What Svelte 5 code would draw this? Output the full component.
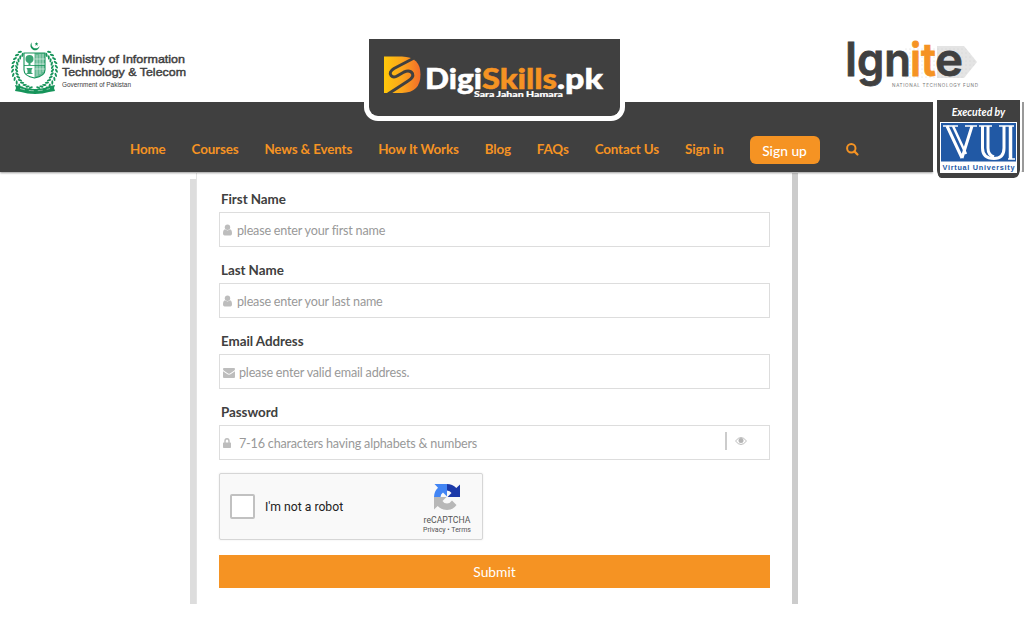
<script>
    const links = ['Home', 'Courses', 'News & Events', 'How It Works', 'Blog', 'FAQs', 'Contact Us', 'Sign in'];

    const fields = [
        { id: 'first', label: 'First Name', icon: 'user', hint: 'please enter your first name', type: 'text' },
        { id: 'last', label: 'Last Name', icon: 'user', hint: 'please enter your last name', type: 'text' },
        { id: 'email', label: 'Email Address', icon: 'mail', hint: 'please enter valid email address.', type: 'email' },
        { id: 'password', label: 'Password', icon: 'lock', hint: '7-16 characters having alphabets & numbers', type: 'password' }
    ];

    // leaves of the wreath, mirrored left and right of the shield
    const leaves = [];
    for (let i = 0; i < 13; i++) {
        const angle = (-48 + i * 10.5) * Math.PI / 180;
        for (const side of [-1, 1]) {
            for (const r of [18, 22]) {
                leaves.push({
                    x: 23.5 + side * Math.cos(angle) * r,
                    y: 28 + Math.sin(angle) * (r + 1),
                    turn: side * ((-48 + i * 10.5) + (r < 20 ? 125 : 55))
                });
            }
        }
    }

    let showPassword = false;
</script>

<header>
    <div class="top">
        <a href="/" class="ministry">
            <svg width="48" height="54" viewBox="0 0 48 54" fill="#16945a">
                <path d="M21 1.2A4.6 4.6 0 1 0 28.6 5A4 4 0 1 1 21 1.2Z" />
                <path d="M25.5 1l.5 1.3 1.4.1-1.1.9.4 1.4-1.2-.8-1.2.8.4-1.4-1.1-.9 1.4-.1z" />
                {#each leaves as leaf}
                    <ellipse cx={leaf.x} cy={leaf.y} rx="2.2" ry="1" transform="rotate({leaf.turn} {leaf.x} {leaf.y})" />
                {/each}
                <path d="M13 12H34V29Q34 35 23.500 37Q13 35 13 29Z" fill="#fff" stroke="#16945a" stroke-width="1.1" />
                <path d="M23.500 12H34V29Q34 35 23.500 37Z" opacity=".65" />
                <path d="M26 14v21M29 13v20M32 13v18M24 18h10M24 23h10M24 28h10" stroke="#fff" stroke-width=".5" />
                <path d="M14.500 18q0-4 4-4t4 4q0 3-3 4v2h-2v-2q-3-1-3-4zM15.500 27h6l-1 2v3h1v1h-6v-1h1v-3z" opacity=".85" />
                <path d="M13 24.5H34" stroke="#16945a" stroke-width=".8" />
                <path d="M4 44l5 1q6 3 15 3t15-3l5-1-1 3 1 3-6 1q-6 2-14 2t-14-2l-6-1 1-3z" />
                <path d="M9 47.500q15 4.500 30 0" stroke="#fff" stroke-width=".5" stroke-dasharray="5 4" fill="none" />
            </svg>
            <svg class="words" width="126" height="40" viewBox="0 0 126 40">
                <text x="0" y="11" textLength="123" lengthAdjust="spacingAndGlyphs">Ministry of Information</text>
                <text x="0" y="24" textLength="124" lengthAdjust="spacingAndGlyphs">Technology &amp; Telecom</text>
                <text x="0" y="34.500" class="small" textLength="69" lengthAdjust="spacingAndGlyphs">Government of Pakistan</text>
            </svg>
        </a>
        <a href="/ignite" class="ignite">
            <svg width="134" height="54" viewBox="0 0 134 54">
                <defs>
                    <pattern id="dots" width="4" height="4" patternUnits="userSpaceOnUse">
                        <circle cx="1" cy="1" r=".5" fill="#ccc" />
                    </pattern>
                </defs>
                <path d="M92 6H119L132 22L119 38H92Z" fill="#e4e4e4" />
                <path d="M58 6H119L132 22L119 38H58Z" fill="url(#dots)" />
                <text y="35.500" class="ignite-word">
                    <tspan x="0" textLength="66" lengthAdjust="spacingAndGlyphs">Ign</tspan><tspan class="hot" x="65" textLength="26" lengthAdjust="spacingAndGlyphs">it</tspan><tspan x="90" textLength="28" lengthAdjust="spacingAndGlyphs">e</tspan>
                </text>
                <text x="47" y="47" class="fund" textLength="86">NATIONAL TECHNOLOGY FUND</text>
            </svg>
        </a>
    </div>

    <nav>
        <ul>
            {#each links as link}
                <li><a href="/">{link}</a></li>
            {/each}
        </ul>
        <a href="/signup" class="signup">Sign up</a>
        <button class="search" aria-label="Search">
            <svg width="13" height="13" viewBox="0 0 13 13" fill="none" stroke="#f59323" stroke-width="2">
                <circle cx="5.300" cy="5.300" r="4.200" />
                <path d="M8.400 8.400L11.500 11.500" stroke-width="2.200" stroke-linecap="round" />
            </svg>
        </button>
    </nav>

    <a href="/" class="brand" aria-label="DigiSkills.pk">
        <svg width="251" height="77" viewBox="0 0 251 77">
            <defs>
                <linearGradient id="sun" x1="0" x2="1" y1="0" y2="0">
                    <stop offset="0" stop-color="#ffc80a" />
                    <stop offset=".5" stop-color="#fba51c" />
                    <stop offset="1" stop-color="#f36c2a" />
                </linearGradient>
            </defs>
            <path d="M15 17.500H33Q51.500 18 51.500 35.500Q51.500 53.500 33 54H15Z" fill="url(#sun)" />
            <path d="M47 18L25 29.500Q19.500 33 22 36.500Q24.500 39.500 29 36.500L35 33Q41 30.500 43.500 34.500Q45 38.500 39 42L19 55" fill="none" stroke="#404040" stroke-width="3" />
            <text y="49.500" class="digi">
                <tspan x="56" textLength="57" lengthAdjust="spacingAndGlyphs">Digi</tspan><tspan class="hot" x="113" textLength="75" lengthAdjust="spacingAndGlyphs">Skills</tspan><tspan x="188" textLength="46" lengthAdjust="spacingAndGlyphs">.pk</tspan>
            </text>
            <text x="105" y="57.500" class="tagline" textLength="89" lengthAdjust="spacingAndGlyphs">Sara Jahan Hamara</text>
        </svg>
    </a>

    <div class="badge">
        <em>Executed by</em>
        <svg width="77" height="51" viewBox="0 0 77 51">
            <rect width="77" height="51" fill="#fff" />
            <rect x="1" y="1" width="75" height="38.500" fill="#2159a5" />
            <!-- monogram: inlined V, U and a closing bar -->
            <g fill="none" stroke="#fff">
                <path d="M3 4H18M25 4H37M39 4H52M59 4H74M68 37H75" stroke-width="1.500" />
                <path d="M7 4L22 36M32 4L22 36" stroke-width="3" />
                <path d="M13 4L26 32" stroke-width="2.500" />
                <path d="M42.500 4V26Q42.500 36.500 54 36.500Q64 36.500 64 26V4" stroke-width="3" />
                <path d="M48 4V26Q48 33 54 35" stroke-width="3" />
                <path d="M70.500 4V37" stroke-width="3.500" />
            </g>
            <text x="2.500" y="47.500" class="vu-name" textLength="72">Virtual University</text>
        </svg>
    </div>
</header>

<main>
    <form>
        {#each fields as field}
            <label for={field.id}>{field.label}</label>
            <div class="field">
                {#if field.icon === 'user'}
                    <svg width="9" height="12" viewBox="0 0 9 12" fill="#bdbdbd">
                        <circle cx="4.500" cy="3.300" r="2.700" />
                        <path d="M2 5.300Q0 5.800 0 9.500Q0 11.500 1.600 11.500H7.400Q9 11.500 9 9.500Q9 5.800 7 5.300Q4.500 7.500 2 5.300Z" />
                    </svg>
                {:else if field.icon === 'mail'}
                    <svg class="mail" width="12" height="10" viewBox="0 0 12 10" fill="#bdbdbd">
                        <path d="M0 1Q0 0 1 0H11Q12 0 12 1Q12 2 11 2.700L7 5.400Q6 6 5 5.400L1 2.700Q0 2 0 1ZM0 3.300L4.500 6.300Q6 7.200 7.500 6.300L12 3.300V9Q12 10 11 10H1Q0 10 0 9Z" />
                    </svg>
                {:else}
                    <svg class="lock" width="8" height="10" viewBox="0 0 8 10" fill="#bdbdbd">
                        <path d="M2 5V3Q2 .8 4 .8T6 3V5" fill="none" stroke="#bdbdbd" stroke-width="1.400" />
                        <rect y="4.500" width="8" height="5.500" rx=".7" />
                    </svg>
                {/if}
                <input
                    id={field.id}
                    type={field.type === 'password' && showPassword ? 'text' : field.type}
                    placeholder={field.hint}
                />
                {#if field.type === 'password'}
                    <button type="button" class="eye" aria-label="Show password" on:click={() => (showPassword = !showPassword)}>
                        <svg width="12" height="8" viewBox="0 0 12 8">
                            <path d="M.5 4Q6-3 11.500 4Q6 11 .5 4Z" fill="none" stroke="#bdbdbd" />
                            <circle cx="6" cy="3.500" r="2.500" fill="#b5b5b5" />
                        </svg>
                    </button>
                {/if}
            </div>
        {/each}

        <div class="captcha">
            <span class="box"></span>
            <span class="robot">I'm not a robot</span>
            <div class="recaptcha">
                <svg width="28" height="28" viewBox="0 0 28 28">
                    <path d="M14 1A13 13 0 0 1 23.300 5L27 1.500V14H14.500L18.500 10Q17 7.500 14 7.500Z" fill="#1c3aa9" />
                    <path d="M1 14A13 13 0 0 1 5 4.700L1.500 1H14V13.500L10 9.500Q7.500 11 7.500 14Z" fill="#4285f4" />
                    <path d="M1 14H13.500L9.500 18Q11 20.500 14 20.500Q17 20.500 19 17.500L23.500 22Q20 27 14 27A13 13 0 0 1 4.700 23L1 26.500Z" fill="#b8b8b8" />
                </svg>
                <span>reCAPTCHA</span>
                <small>Privacy &bull; Terms</small>
            </div>
        </div>

        <button class="submit">Submit</button>
    </form>
</main>

<style>
    :global(body) {
        background: #fff;
        font-family: Lato, sans-serif;
        color: #404040;
    }

    header {
        position: relative;
        padding-top: 39px;
    }

    a {
        text-decoration: none;
        color: inherit;
    }

    svg {
        overflow: visible;
    }

    .top {
        display: flex;
        justify-content: space-between;
        height: 63px;
        padding: 0 45px 0 11px;
        box-sizing: border-box;
    }

    .ministry {
        display: flex;
        gap: 3px;
        padding-top: 2px;
    }

    .words {
        margin-top: 11px;
        font: 11.8px "Liberation Sans", sans-serif;
        fill: #404040;
        stroke: #404040;
        stroke-width: .45px;
    }

    .words .small {
        font-size: 6.6px;
        stroke: none;
    }

    .ignite-word {
        font: 600 46px Inter, sans-serif;
        fill: #404040;
        stroke: #404040;
        stroke-width: .8px;
    }

    .hot {
        fill: #f59323;
    }

    .ignite-word .hot {
        stroke: #f59323;
    }

    .fund {
        font: 4.6px Inter, sans-serif;
        fill: #777;
    }

    .ignite {
        padding-top: 1px;
    }

    nav {
        display: flex;
        align-items: center;
        height: 70px;
        width: 933px;
        padding: 23px 0 0 130px;
        box-sizing: border-box;
        background: #404040;
        box-shadow: 0 1px 2px rgba(0, 0, 0, .4), 91px 0 #999;
        clip-path: inset(0 -91px -5px 0);
    }

    ul {
        display: flex;
        gap: 26px;
        margin: 0;
        padding: 0;
        list-style: none;
        color: #f59323;
        font-size: 13.4px;
        font-weight: 700;
        letter-spacing: -.15px;
    }

    li {
        white-space: nowrap;
    }

    .signup {
        margin: 3px 26px 0;
        width: 70px;
        height: 28px;
        line-height: 30px;
        text-align: center;
        font-size: 13.8px;
        font-weight: 500;
        color: #fff;
        background: #f59323;
        border-radius: 6px;
    }

    button {
        border: 0;
        padding: 0;
        background: none;
        font-family: inherit;
    }

    .search {
        display: flex;
        margin-top: 1px;
    }

    .brand {
        position: absolute;
        top: 39px;
        left: 364px;
        height: 77px;
        border: 5px solid #fff;
        border-top: 0;
        border-radius: 0 0 14px 14px;
        background: #404040;
    }

    .digi {
        font: 900 29px Lato, sans-serif;
        fill: #fff;
        stroke: #fff;
        stroke-width: .5px;
    }

    .digi .hot {
        stroke: #f59323;
    }

    .tagline {
        font: 900 8px Lato, sans-serif;
        fill: #fff;
        stroke: #fff;
        stroke-width: .2px;
    }

    .badge {
        position: absolute;
        top: 100px;
        left: 933px;
        width: 83px;
        height: 78px;
        border: solid #fff;
        border-width: 0 2px 0 4px;
        background: #404040;
        background-clip: padding-box;
        border-radius: 0 0 8px 8px;
        text-align: center;
        color: #fff;
    }

    .badge em {
        display: block;
        height: 22px;
        line-height: 24px;
        font-size: 10.5px;
        font-weight: 700;
    }

    .badge svg {
        display: block;
        margin: 0 auto;
    }

    .vu-name {
        font: 700 7.3px "Liberation Sans", sans-serif;
        fill: #2159a5;
    }

    main {
        display: flex;
        width: 608px;
        height: 431px;
        margin: 1px 0 0 190px;
        box-sizing: border-box;
        border-right: 6px solid #ccc;
    }

    main::before {
        content: "";
        width: 6px;
        margin-top: 6px;
        background: #ddd;
    }

    form {
        width: 551px;
        padding: 17px 0 0 22px;
        border-left: 1px solid #e3e3e3;
    }

    label {
        display: block;
        height: 22px;
        padding-left: 2px;
        line-height: 18px;
        font-size: 13.4px;
        font-weight: 700;
        letter-spacing: -.05px;
    }

    .field {
        display: flex;
        align-items: center;
        height: 35px;
        margin-bottom: 14.1px;
        padding-left: 3px;
        box-sizing: border-box;
        border: 1px solid #ddd;
    }

    .field svg {
        flex: none;
    }

    .field .mail {
        margin-top: 2px;
    }

    .field .lock {
        margin-right: 4px;
    }

    input {
        flex: 1;
        border: 0;
        outline: 0;
        padding: 2px 0 0 5px;
        background: none;
        font: 12.6px Lato, sans-serif;
        letter-spacing: -.2px;
    }

    .field .lock + input,
    .field .mail + input {
        padding-left: 4px;
    }

    input::placeholder {
        color: #999;
        opacity: 1;
    }

    .eye {
        display: flex;
        align-items: center;
        height: 18px;
        margin: 0 22px 3px 0;
        padding-left: 8px;
        border-left: 2px solid #ccc;
    }

    .captcha {
        display: flex;
        align-items: center;
        width: 264px;
        height: 67px;
        margin-top: -1px;
        padding: 0 11px 0 10px;
        box-sizing: border-box;
        border: 1px solid #d6d6d6;
        border-radius: 2px;
        background: #f9f9f9;
        box-shadow: 0 0 2px rgba(0, 0, 0, .1);
        font-family: Roboto, sans-serif;
    }

    .box {
        width: 21px;
        height: 21px;
        margin-top: -1px;
        border: 2px solid #c1c1c1;
        border-radius: 2px;
        background: #fff;
    }

    .robot {
        margin-left: 10px;
        font-size: 12.2px;
        color: #222;
    }

    .recaptcha {
        display: flex;
        flex-direction: column;
        align-items: center;
        margin: 4px 0 0 auto;
        color: #555;
        font-size: 8.7px;
        line-height: 10px;
    }

    .recaptcha svg {
        margin-bottom: 4px;
    }

    small {
        font-size: 7px;
    }

    .submit {
        display: block;
        width: 551px;
        height: 33px;
        margin-top: 14.5px;
        background: #f59323;
        color: #fff;
        font-size: 13.8px;
    }
</style>
